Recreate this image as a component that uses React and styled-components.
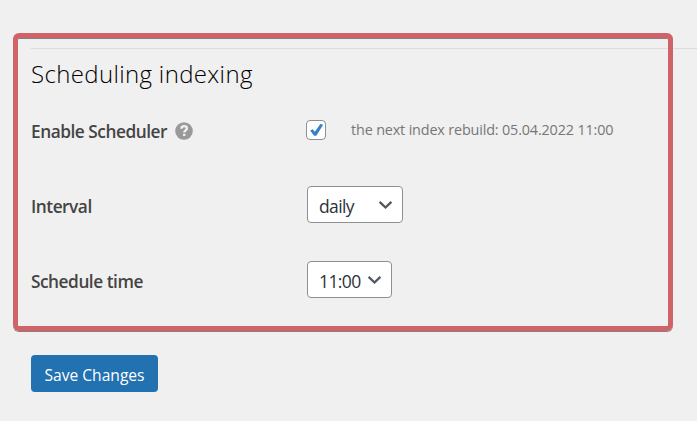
import React from 'react';
import styled, { createGlobalStyle } from 'styled-components';

const GlobalStyle = createGlobalStyle`
  *, *::before, *::after { box-sizing: border-box; }
  body {
    margin: 0;
    background: #f0f0f0;
    color: #3c434a;
    font-family: "Open Sans", "Noto Sans", sans-serif;
    overflow: hidden;
  }
`;

const Page = styled.main`
  position: relative;
  height: 421px;
  padding: 48px 0 0 31px;
`;

const Highlight = styled.div`
  position: absolute;
  left: 13px;
  top: 33px;
  width: 660px;
  height: 298px;
  border: 5px solid #cf6368;
  border-radius: 6px;
  box-shadow: 0 1px 0 #8d7c7f, inset 0 1px 0 #8d7c7f;
  pointer-events: none;
`;

const Section = styled.section`
  border-top: 1px solid #dcdcde;
  height: 307px;
`;

const Heading = styled.h2`
  margin: 0;
  height: 43px;
  padding-top: 8px;
  font-size: 24px;
  font-weight: 300;
  line-height: 33px;
  letter-spacing: 0.35px;
  color: #000;
`;

const Field = styled.div`
  display: grid;
  grid-template-columns: ${(p) => (p.$check ? '275px' : '276px')} 1fr;
  align-items: center;
  height: 75px;
`;

const Label = styled.label`
  display: flex;
  align-items: center;
  gap: 8px;
  padding-top: 4px;
  font-size: 17.3px;
  font-weight: 600;
  line-height: 24px;
  letter-spacing: -0.48px;
  color: #444;
`;

const HelpIcon = styled.svg`
  display: block;
  margin-top: -2px;
`;

const Control = styled.div`
  display: flex;
  align-items: center;
  gap: 25px;
`;

const Checkbox = styled.span`
  display: flex;
  width: 20px;
  height: 20px;
  border: 1px solid #8c8f94;
  border-radius: 4px;
  background: #fff;
`;

const Note = styled.span`
  font-size: 14.4px;
  line-height: 20px;
  letter-spacing: -0.16px;
  color: #777;
`;

const Select = styled.button`
  display: flex;
  align-items: center;
  justify-content: space-between;
  width: ${(p) => p.$width}px;
  height: 37px;
  margin: 0;
  padding: 2px 9px 0 11px;
  border: 1px solid #8c8f94;
  border-radius: 4px;
  background: #fff;
  color: #2c3338;
  font: 400 17.5px/24px "Open Sans", "Noto Sans", sans-serif;
  letter-spacing: -0.6px;
`;

const ChevronIcon = styled.svg`
  display: block;
  margin-top: -2px;
`;

const SaveButton = styled.button`
  display: flex;
  align-items: center;
  justify-content: center;
  width: 127px;
  height: 37px;
  margin: 0;
  padding: 2px 0 0;
  border: 0;
  border-radius: 4px;
  background: #2271b1;
  color: #fff;
  font: 400 15.6px/22px "Open Sans", "Noto Sans", sans-serif;
`;

const Help = () => (
  <HelpIcon width="18" height="18" viewBox="0 0 18 18" aria-label="Help">
    <circle cx="9" cy="9" r="8.8" fill="#999" />
    <path d="M6.3 6.8C6.4 5.1 7.5 4.2 9.1 4.2C10.8 4.2 11.9 5.1 11.9 6.5C11.9 8.3 9.2 8.4 9.2 10.5" fill="none" stroke="#f0f0f0" strokeWidth="2.3" />
    <rect x="8" y="11.7" width="2.4" height="2.3" rx="0.5" fill="#f0f0f0" />
  </HelpIcon>
);

const Check = () => (
  <svg width="18" height="18" viewBox="0 0 18 18">
    <path d="M3.2 9.5L5.8 8.2L7.8 10.8L13.4 2.9L16.2 3.8L9.3 14.7H7Z" fill="#3582c4" />
  </svg>
);

const Chevron = () => (
  <ChevronIcon width="15" height="10" viewBox="0 0 15 10">
    <path d="M1.6 1.8L7.5 7.5L13.4 1.8" fill="none" stroke="#50575e" strokeWidth="2.3" />
  </ChevronIcon>
);

export default function App() {
  return (
    <>
      <GlobalStyle />
      <Page>
        <Section>
          <Heading>Scheduling indexing</Heading>
          <Field $check>
            <Label>
              Enable Scheduler <Help />
            </Label>
            <Control>
              <Checkbox role="checkbox" aria-checked="true">
                <Check />
              </Checkbox>
              <Note>the next index rebuild: 05.04.2022 11:00</Note>
            </Control>
          </Field>
          <Field>
            <Label>Interval</Label>
            <Select $width={96}>
              daily <Chevron />
            </Select>
          </Field>
          <Field>
            <Label>Schedule time</Label>
            <Select $width={85}>
              11:00 <Chevron />
            </Select>
          </Field>
        </Section>
        <SaveButton>Save Changes</SaveButton>
        <Highlight />
      </Page>
    </>
  );
}
